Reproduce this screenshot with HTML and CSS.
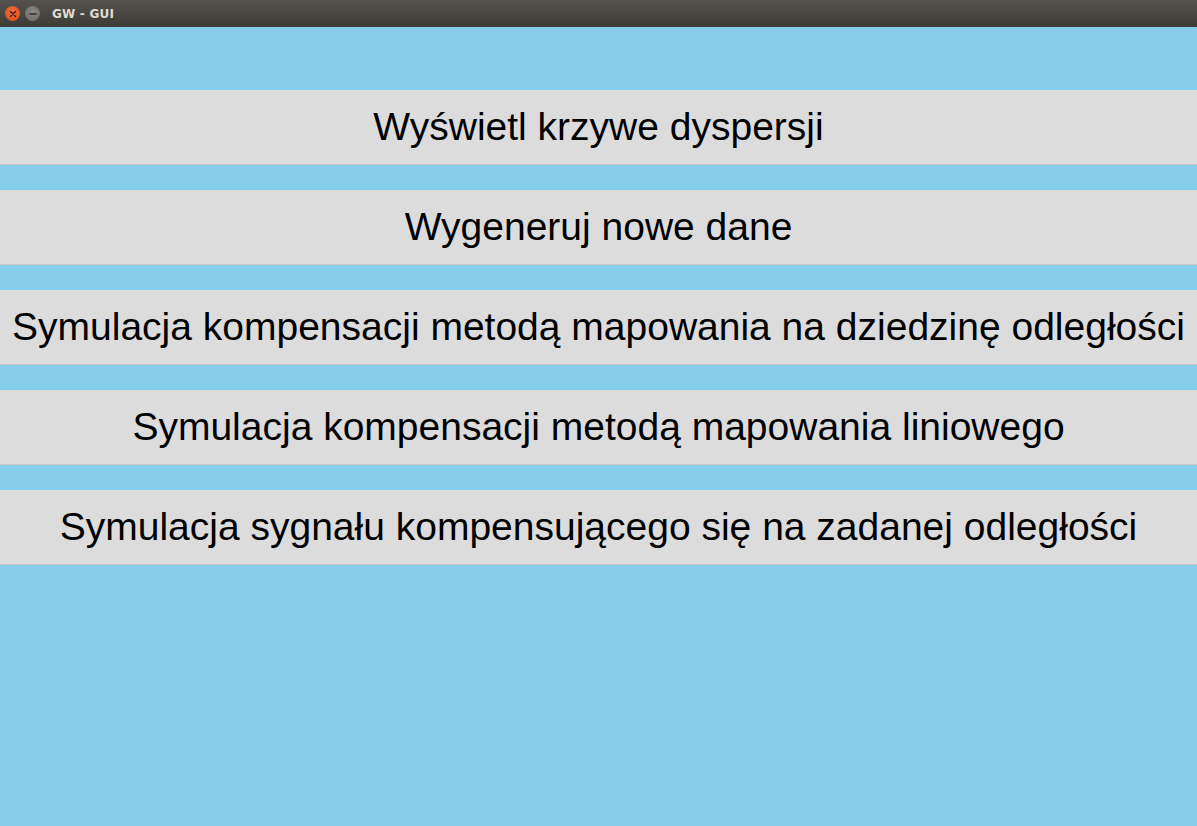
FILE: index.html
```html
<!DOCTYPE html>
<html lang="pl">
<head>
<meta charset="utf-8">
<title>GW - GUI</title>
<link rel="stylesheet" href="styles.css">
</head>
<body>
<div class="window">
  <header class="titlebar">
    <div class="controls">
      <span class="ctl close">
        <svg width="8" height="8" viewBox="0 0 8 8"><path d="M1.5 1.5 L6.5 6.5 M6.5 1.5 L1.5 6.5" stroke="#3a1a10" stroke-width="1.3" stroke-linecap="round"/></svg>
      </span>
      <span class="ctl min">
        <svg width="8" height="8" viewBox="0 0 8 8"><path d="M1 4 L7 4" stroke="#2e2e2c" stroke-width="1.3" stroke-linecap="round"/></svg>
      </span>
    </div>
    <span class="title">GW - GUI</span>
  </header>
  <main class="content">
    <button class="btn">Wyświetl krzywe dyspersji</button>
    <button class="btn">Wygeneruj nowe dane</button>
    <button class="btn">Symulacja kompensacji metodą mapowania na dziedzinę odległości</button>
    <button class="btn">Symulacja kompensacji metodą mapowania liniowego</button>
    <button class="btn">Symulacja sygnału kompensującego się na zadanej odległości</button>
  </main>
</div>
</body>
</html>
```
FILE: styles.css
```css
html, body {
  margin: 0;
  padding: 0;
  height: 100%;
}
body {
  background: #87ceeb;
  font-family: "Liberation Sans", Arial, sans-serif;
}
.window {
  display: flex;
  flex-direction: column;
  height: 826px;
}
.titlebar {
  height: 27px;
  flex: 0 0 27px;
  background: linear-gradient(#56534e, #3d3b37);
  display: flex;
  align-items: center;
  box-sizing: border-box;
  padding-left: 5px;
}
.controls {
  display: flex;
  gap: 5px;
  align-items: center;
}
.ctl {
  width: 15px;
  height: 15px;
  border-radius: 50%;
  display: flex;
  align-items: center;
  justify-content: center;
}
.ctl.close {
  background: radial-gradient(circle at 50% 40%, #f26d3d, #dd4814);
}
.ctl.min {
  background: radial-gradient(circle at 50% 40%, #8a8883, #6b6964);
}
.title {
  margin-left: 12px;
  font-family: "DejaVu Sans", "Noto Sans", sans-serif;
  font-weight: bold;
  font-size: 12px;
  color: #dfdbd2;
  letter-spacing: 0.2px;
}
.content {
  display: flex;
  flex-direction: column;
  gap: 25px;
  padding-top: 63px;
}
.btn {
  height: 75px;
  border: none;
  border-bottom: 1px solid #c8c8c8;
  background: #dcdcdc;
  color: #000;
  font-family: "Liberation Sans", Arial, sans-serif;
  font-size: 39px;
  padding: 0;
  margin: 0;
  width: 100%;
  text-align: center;
  box-sizing: border-box;
}
```
